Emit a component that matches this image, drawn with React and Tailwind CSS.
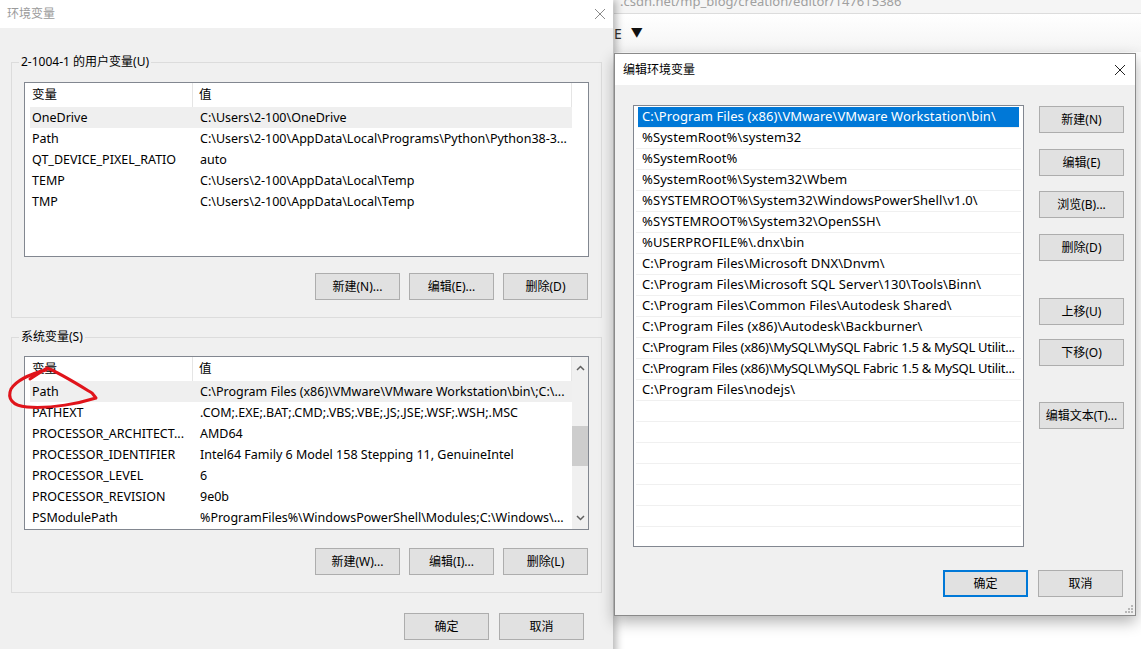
import React from 'react';

const userVars = [
    ['OneDrive', 'C:\\Users\\2-100\\OneDrive'],
    ['Path', 'C:\\Users\\2-100\\AppData\\Local\\Programs\\Python\\Python38-3...'],
    ['QT_DEVICE_PIXEL_RATIO', 'auto'],
    ['TEMP', 'C:\\Users\\2-100\\AppData\\Local\\Temp'],
    ['TMP', 'C:\\Users\\2-100\\AppData\\Local\\Temp'],
];

const sysVars = [
    ['Path', 'C:\\Program Files (x86)\\VMware\\VMware Workstation\\bin\\;C:\\...'],
    ['PATHEXT', '.COM;.EXE;.BAT;.CMD;.VBS;.VBE;.JS;.JSE;.WSF;.WSH;.MSC'],
    ['PROCESSOR_ARCHITECT...', 'AMD64'],
    ['PROCESSOR_IDENTIFIER', 'Intel64 Family 6 Model 158 Stepping 11, GenuineIntel'],
    ['PROCESSOR_LEVEL', '6'],
    ['PROCESSOR_REVISION', '9e0b'],
    ['PSModulePath', '%ProgramFiles%\\WindowsPowerShell\\Modules;C:\\Windows\\...'],
];

const pathItems = [
    'C:\\Program Files (x86)\\VMware\\VMware Workstation\\bin\\',
    '%SystemRoot%\\system32',
    '%SystemRoot%',
    '%SystemRoot%\\System32\\Wbem',
    '%SYSTEMROOT%\\System32\\WindowsPowerShell\\v1.0\\',
    '%SYSTEMROOT%\\System32\\OpenSSH\\',
    '%USERPROFILE%\\.dnx\\bin',
    'C:\\Program Files\\Microsoft DNX\\Dnvm\\',
    'C:\\Program Files\\Microsoft SQL Server\\130\\Tools\\Binn\\',
    'C:\\Program Files\\Common Files\\Autodesk Shared\\',
    'C:\\Program Files (x86)\\Autodesk\\Backburner\\',
    'C:\\Program Files (x86)\\MySQL\\MySQL Fabric 1.5 & MySQL Utilit...',
    'C:\\Program Files (x86)\\MySQL\\MySQL Fabric 1.5 & MySQL Utilit...',
    'C:\\Program Files\\nodejs\\',
];

const CloseIcon = ({ color }) => (
    <svg width="12" height="12" viewBox="0 0 12 12">
        <path d="M1 1 L11 11 M11 1 L1 11" stroke={color} strokeWidth="1" fill="none" />
    </svg>
);

const WinButton = ({ children, primary, className = '' }) => (
    <button
        className={`h-[27px] w-[85px] shrink-0 bg-[#e1e1e1] text-[12px] text-black flex items-center justify-center ${
            primary ? 'border-2 border-[#0078d7]' : 'border border-[#adadad]'
        } ${className}`}
    >
        {children}
    </button>
);

const GroupBox = ({ label, children, className = '' }) => (
    <div className={`relative border border-[#dcdcdc] ${className}`}>
        <span className="absolute left-[7px] top-[-9px] bg-[#f0f0f0] px-[2px] text-[12px] leading-[16px] text-black">
            {label}
        </span>
        {children}
    </div>
);

const VarList = ({ rows, height, scroll }) => (
    <div className={`flex border border-[#828790] bg-white ${height}`}>
        <div className="w-[547px] shrink-0">
            <div className="flex h-[24px] items-center text-[12.5px]">
                <div className="h-full w-[168px] border-r border-[#e5e5e5] pl-[7px] leading-[24px]">变量</div>
                <div className="h-full flex-1 border-r border-[#e5e5e5] pl-[6px] leading-[24px]">值</div>
            </div>
            {rows.map(([name, value], i) => (
                <div
                    key={name + i}
                    className={`ml-[5px] flex h-[21px] items-center pt-px text-[12.5px] ${i === 0 ? 'bg-[#efefef]' : ''}`}
                >
                    <div className="w-[163px] shrink-0 pl-[2px] whitespace-nowrap">{name}</div>
                    <div className="pl-[7px] whitespace-nowrap">{value}</div>
                </div>
            ))}
        </div>
        {scroll ? (
            <div className="flex w-[17px] flex-col items-center bg-[#f0f0f0]">
                <svg width="9" height="6" viewBox="0 0 9 6" className="mt-[8px]">
                    <path d="M1 5 L4.5 1.5 L8 5" stroke="#606060" strokeWidth="1.5" fill="none" />
                </svg>
                <div className="mt-[55px] h-[40px] w-[16px] bg-[#cdcdcd]" />
                <div className="flex-1" />
                <svg width="9" height="6" viewBox="0 0 9 6" className="mb-[8px]">
                    <path d="M1 1 L4.5 4.5 L8 1" stroke="#606060" strokeWidth="1.5" fill="none" />
                </svg>
            </div>
        ) : (
            <div className="w-[17px]" />
        )}
    </div>
);

const EnvDialog = () => (
    <div className="absolute left-0 top-0 h-[660px] w-[613px] bg-[#f0f0f0] shadow-[3px_0_8px_rgba(0,0,0,0.3)]">
        <div className="flex h-[28px] items-center justify-between bg-white pl-[7px] pr-[7px]">
            <span className="text-[12px] text-[#9a9a9a]">环境变量</span>
            <CloseIcon color="#8a8a8a" />
        </div>
        <div className="flex flex-col pl-[11px] pr-[11px]">
            <GroupBox label="2-1004-1 的用户变量(U)" className="mt-[34px] h-[256px] px-[12px] pt-[19px]">
                <VarList rows={userVars} height="h-[175px]" />
                <div className="mt-[16px] flex justify-end gap-[9px] pr-px">
                    <WinButton>新建(N)...</WinButton>
                    <WinButton>编辑(E)...</WinButton>
                    <WinButton>删除(D)</WinButton>
                </div>
            </GroupBox>
            <GroupBox label="系统变量(S)" className="mt-[19px] h-[256px] px-[12px] pt-[18px]">
                <VarList rows={sysVars} height="h-[174px]" scroll />
                <div className="mt-[18px] flex justify-end gap-[9px] pr-px">
                    <WinButton>新建(W)...</WinButton>
                    <WinButton>编辑(I)...</WinButton>
                    <WinButton>删除(L)</WinButton>
                </div>
            </GroupBox>
            <div className="mt-[20px] flex justify-end gap-[10px] pr-[18px]">
                <WinButton>确定</WinButton>
                <WinButton>取消</WinButton>
            </div>
        </div>
    </div>
);

const EditDialog = () => (
    <div className="absolute left-[614px] top-[53px] flex h-[563px] w-[522px] flex-col border border-[#8a8a8a] bg-[#f0f0f0] shadow-[0_6px_14px_rgba(0,0,0,0.3)]">
        <div className="flex h-[31px] items-center justify-between bg-white pl-[8px] pr-[9px]">
            <span className="text-[12px] text-black">编辑环境变量</span>
            <CloseIcon color="#222" />
        </div>
        <div className="flex pl-[18px] pt-[20px]">
            <div className="h-[442px] w-[391px] border border-[#828790] bg-white px-[2px] pt-px">
                {Array.from({ length: 21 }).map((_, i) => {
                    const item = pathItems[i] || '';
                    const long = item.includes('MySQL');
                    return (
                        <div
                            key={i}
                            className={`flex h-[21px] items-center border-b border-[#f0f0f0] text-[13px] whitespace-nowrap overflow-hidden ${
                                long ? 'tracking-[-0.3px]' : 'tracking-[0.1px]'
                            } ${i === 0 ? 'mx-[2px] bg-[#0078d7] pl-[4px] text-white' : 'pl-[6px] text-black'}`}
                        >
                            {item}
                        </div>
                    );
                })}
            </div>
            <div className="ml-[15px] flex flex-col pt-px">
                <WinButton>新建(N)</WinButton>
                <WinButton className="mt-[16px]">编辑(E)</WinButton>
                <WinButton className="mt-[15px]">浏览(B)...</WinButton>
                <WinButton className="mt-[16px]">删除(D)</WinButton>
                <WinButton className="mt-[37px]">上移(U)</WinButton>
                <WinButton className="mt-[14px]">下移(O)</WinButton>
                <WinButton className="mt-[36px]">编辑文本(T)...</WinButton>
            </div>
        </div>
        <div className="mt-[23px] flex justify-end gap-[10px] pr-[12px]">
            <WinButton primary>确定</WinButton>
            <WinButton>取消</WinButton>
        </div>
        <div className="flex flex-1 items-end justify-end pb-[2px] pr-[2px]">
            <svg width="8" height="8" viewBox="0 0 8 8">
                <rect x="6" y="0" width="2" height="2" fill="#b8b8b8" />
                <rect x="3" y="3" width="2" height="2" fill="#b8b8b8" />
                <rect x="6" y="3" width="2" height="2" fill="#b8b8b8" />
                <rect x="0" y="6" width="2" height="2" fill="#b8b8b8" />
                <rect x="3" y="6" width="2" height="2" fill="#b8b8b8" />
                <rect x="6" y="6" width="2" height="2" fill="#b8b8b8" />
            </svg>
        </div>
    </div>
);

export default function App() {
    return (
        <div className="relative h-[649px] w-[1141px] overflow-hidden bg-white font-['Noto_Sans','Noto_Sans_CJK_SC',sans-serif] text-black">
            {/* browser page behind the dialogs */}
            <div className="flex flex-col pl-[614px]">
                <div className="h-[10px] overflow-hidden bg-[#f5f5f5]">
                    <div className="mt-[-7px] pl-[6px] text-[13px] leading-[16px] text-[#a0a0a0] whitespace-nowrap">
                        .csdn.net/mp_blog/creation/editor/147615386
                    </div>
                </div>
                <div className="h-[4px] border-b border-[#dcdcdc] bg-[#f5f5f5]" />
                <div className="flex h-[38px] items-center gap-[9px] bg-gradient-to-b from-white to-[#f4f4f4]">
                    <span className="text-[14px] text-[#333]">E</span>
                    <span className="text-[12px] text-[#111]">▼</span>
                </div>
            </div>

            <EnvDialog />
            <EditDialog />

            {/* red hand-drawn mark around Path */}
            <svg className="absolute left-0 top-[360px]" width="110" height="55" viewBox="0 0 110 55">
                <path
                    d="M30 19 L47 8 C58 12 74 22 92 33 L96 38 C80 43 52 49 27 47 C12 46 7 38 11 29 C16 21 30 14 46 10"
                    stroke="#e0141b"
                    strokeWidth="3"
                    fill="none"
                    strokeLinecap="round"
                    strokeLinejoin="round"
                />
            </svg>
        </div>
    );
}
